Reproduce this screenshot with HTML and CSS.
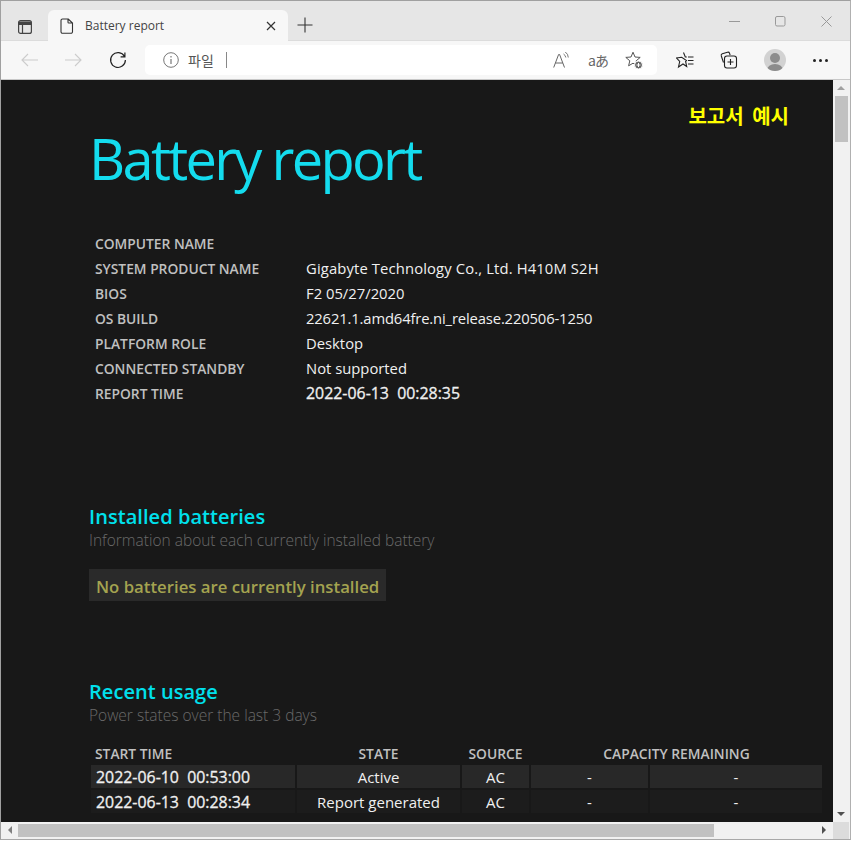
FILE: index.html
```html
<!DOCTYPE html>
<html lang="ko">
<head>
<meta charset="utf-8">
<title>Battery report</title>
<link rel="stylesheet" href="styles.css">
</head>
<body>
<div class="window">
  <div class="tabstrip">
    <div class="tabs-btn">
      <svg width="16" height="16" viewBox="0 0 16 16" fill="none" stroke="#444" stroke-width="1.200"><path d="M2 2.500h12v3H2z" fill="#444" stroke="none"/><rect x="1.600" y="1.600" width="12.800" height="12.800" rx="2"/><path d="M1.600 5.500h12.800M5.500 5.500v8.900"/></svg>
    </div>
    <div class="tab">
      <svg class="tab-doc" width="14" height="16" viewBox="0 0 14 16" fill="none" stroke="#333" stroke-width="1.100"><path d="M2.500 1h5.800L12.500 5v8.800a1.500 1.500 0 0 1-1.500 1.500H2.500A1.500 1.500 0 0 1 1 13.800V2.500A1.500 1.500 0 0 1 2.500 1zM8 1v3.200A.8.8 0 0 0 8.800 5h3.700"/></svg>
      <span class="tab-title">Battery report</span>
      <svg class="tab-close" width="10" height="10" viewBox="0 0 10 10" stroke="#333" stroke-width="1.200"><path d="M1 1l8 8M9 1l-8 8"/></svg>
    </div>
    <svg class="new-tab" width="16" height="16" viewBox="0 0 16 16" stroke="#333" stroke-width="1.100"><path d="M8 .5v15M.5 8h15"/></svg>
    <div class="caption">
      <svg width="11" height="11" viewBox="0 0 11 11" stroke="#999"><path d="M0 5.500h11"/></svg>
      <svg width="11" height="11" viewBox="0 0 11 11" fill="none" stroke="#999"><rect x=".5" y=".5" width="9.500" height="9.500" rx="1.500"/></svg>
      <svg width="11" height="11" viewBox="0 0 11 11" stroke="#999"><path d="M.5.500l10 10M10.500.500l-10 10"/></svg>
    </div>
  </div>
  <div class="toolbar">
    <div class="nav">
      <svg width="17" height="14" viewBox="0 0 17 14" fill="none" stroke="#ccc" stroke-width="1.100"><path d="M17 7H1M7 1L1 7l6 6"/></svg>
      <svg width="17" height="14" viewBox="0 0 17 14" fill="none" stroke="#ccc" stroke-width="1.100"><path d="M0 7h16M10 1l6 6-6 6"/></svg>
      <svg class="reload" width="18" height="18" viewBox="0 0 18 18" fill="none" stroke="#222" stroke-width="1.200"><path d="M15.500 5.500A7.400 7.400 0 1 0 16.400 9M15.900 1.500v4.300h-4.300"/></svg>
    </div>
    <div class="address">
      <svg class="info" width="16" height="16" viewBox="0 0 16 16" fill="none" stroke="#777"><circle cx="8" cy="8" r="7.300"/><path d="M8 7v5M8 4v1.500" stroke-width="1.200"/></svg>
      <span class="proto">파일</span>
      <span class="sep"></span>
      <div class="addr-icons">
        <svg class="read-aloud" width="18" height="18" viewBox="0 0 18 18" fill="none" stroke="#666"><path d="M.7 16.500L5.600 3.500h1l4.900 13M2.400 12h7.400"/><path d="M10.500 3a5 5 0 0 1 2.300 3.500M12.300 1a7 7 0 0 1 3 5.500" stroke-width=".9"/></svg>
        <span class="translate">aあ</span>
        <svg width="18" height="18" viewBox="0 0 18 18" fill="none" stroke="#555"><path d="M8 1.200L10 6l5.200.4-4 3.400 1.200 5L8 12.200l-4.400 2.600 1.200-5-4-3.400L6 6z"/><circle cx="13.500" cy="14" r="4" fill="#666" stroke="#fff"/><path d="M13.500 12v4M11.500 14h4" stroke="#fff"/></svg>
      </div>
    </div>
    <div class="tools">
      <svg width="18" height="18" viewBox="0 0 18 18" fill="none" stroke="#222" stroke-width="1.100"><path d="M7.500 1.500l1.800 4.500h1.500M10.500 9.500l-.9.9 1.100 5.100L7 13l-4.500 3 1.200-5.500L.5 7l5.200-.7zM12 6h5.500M12 9.500h5.500M12 13h5.500"/></svg>
      <svg width="18" height="18" viewBox="0 0 18 18" fill="none" stroke="#222" stroke-width="1.100"><path d="M3.500 11.500L1.300 5c-.3-1 0-1.800 1-2.200L7.500 1.200c1-.3 1.700.1 2 1l.6 2"/><rect x="4.500" y="5" width="12" height="12" rx="2.500"/><path d="M10.500 8v6M7.500 11h6"/></svg>
      <div class="avatar"><span class="avatar-head"></span><span class="avatar-body"></span></div>
      <span class="dots"><i></i><i></i><i></i></span>
    </div>
  </div>
  <div class="viewport">
    <main class="page">
      <p class="sample">보고서 예시</p>
      <h1>Battery report</h1>
      <table class="info-table">
        <tr><th>COMPUTER NAME</th><td></td></tr>
        <tr><th>SYSTEM PRODUCT NAME</th><td class="wide">Gigabyte Technology Co., Ltd. H410M S2H</td></tr>
        <tr><th>BIOS</th><td>F2 05/27/2020</td></tr>
        <tr><th>OS BUILD</th><td class="tight">22621.1.amd64fre.ni_release.220506-1250</td></tr>
        <tr><th>PLATFORM ROLE</th><td>Desktop</td></tr>
        <tr><th>CONNECTED STANDBY</th><td>Not supported</td></tr>
        <tr><th>REPORT TIME</th><td class="time">2022-06-13&nbsp; 00:28:35</td></tr>
      </table>
      <h2 class="first">Installed batteries</h2>
      <p class="desc">Information about each currently installed battery</p>
      <div class="notice">No batteries are currently installed</div>
      <h2 class="second">Recent usage</h2>
      <p class="desc">Power states over the last 3 days</p>
      <table class="usage">
        <colgroup><col class="c1"><col class="c2"><col class="c3"><col class="c4"><col class="c5"></colgroup>
        <tr class="head"><th class="left">START TIME</th><th>STATE</th><th>SOURCE</th><th colspan="2">CAPACITY REMAINING</th></tr>
        <tr class="odd"><td class="stamp">2022-06-10&nbsp; 00:53:00</td><td>Active</td><td>AC</td><td>-</td><td>-</td></tr>
        <tr class="even"><td class="stamp">2022-06-13&nbsp; 00:28:34</td><td>Report generated</td><td>AC</td><td>-</td><td>-</td></tr>
      </table>
    </main>
    <div class="vscroll">
      <span class="arrow up"></span>
      <span class="vthumb"></span>
      <span class="arrow down"></span>
    </div>
  </div>
  <div class="hscroll">
    <span class="arrow left-a"></span>
    <span class="hthumb"></span>
    <span class="arrow right-a"></span>
    <span class="corner"></span>
  </div>
</div>
</body>
</html>
```
FILE: styles.css
```css
* { box-sizing: border-box; }
html, body { margin: 0; height: 100%; overflow: hidden; background: #fff; }
body { font-family: "Open Sans", "Noto Sans CJK KR", sans-serif; }

.window { width: 851px; height: 840px; display: flex; flex-direction: column; border: 1px solid #a0a0a0; border-right-color: #b0b0b0; border-bottom-color: #a8a8a8; }

.tabstrip { height: 40px; flex: none; background: #e6e6e6; display: flex; align-items: flex-end; border-bottom: 1px solid #dcdcdc; position: relative; }
.tabs-btn { width: 47px; height: 31px; padding: 9px 0 0 16px; flex: none; }
.tab { width: 240px; height: 31px; background: #f7f7f7; border-radius: 6px 6px 0 0; display: flex; align-items: center; padding: 0 12px 0 12px; flex: none; margin-bottom: -1px; }
.tab-doc { flex: none; }
.tab-title { font-size: 12px; color: #444; margin-left: 11px; flex: 1; }
.new-tab { margin: 0 0 7px 9px; flex: none; }
.caption { margin-left: auto; height: 100%; display: flex; gap: 35px; align-items: flex-start; padding: 15px 18px 0 0; }

.toolbar { height: 39px; flex: none; background: #f7f7f7; border-bottom: 1px solid #c8c8c8; display: flex; align-items: flex-start; }
.nav { width: 144px; display: flex; gap: 27px; padding: 0 0 0 20px; flex: none; align-items: center; height: 30px; margin-top: 4px; }
.address { width: 512px; height: 30px; margin-top: 4px; background: #fff; border-radius: 5px; display: flex; align-items: center; padding: 0 14px 0 18px; flex: none; }
.proto { font-size: 14px; color: #555; margin-left: 9px; }
.sep { width: 1px; height: 16px; background: #888; margin-left: 12px; }
.addr-icons { margin-left: auto; display: flex; align-items: center; gap: 19px; }
.read-aloud { margin-right: -2px; }
.translate { font-size: 14px; color: #666; width: 18px; letter-spacing: -1px; white-space: nowrap; font-family: "Noto Sans CJK JP", sans-serif; line-height: 18px; }
.tools { display: flex; align-items: center; height: 30px; margin-top: 4px; padding-left: 19px; gap: 26px; }
.avatar { width: 22px; height: 22px; border-radius: 50%; background: #d2d2d2; position: relative; overflow: hidden; margin-right: 1px; }
.avatar-head { position: absolute; left: 6px; top: 4px; width: 10px; height: 10px; border-radius: 50%; background: #8c8c8c; }
.avatar-body { position: absolute; left: 3px; top: 15px; width: 16px; height: 12px; border-radius: 50%; background: #8c8c8c; }
.dots { display: flex; gap: 3px; }
.dots i { width: 3px; height: 3px; border-radius: 50%; background: #222; }

.viewport { flex: 1; min-height: 0; display: flex; overflow: hidden; }
.page { flex: 1; min-width: 0; background: #181818; color: #f0f0f0; padding: 0 0 0 88px; position: relative; overflow: hidden; }
.sample { position: absolute; right: 44px; top: 23px; margin: 0; color: #ffff00; font-weight: 700; font-size: 20px; line-height: 26px; word-spacing: 3px; font-family: "Noto Sans CJK KR", sans-serif; }
h1 { font-weight: 400; font-size: 56px; line-height: 76px; color: #14dcee; margin: 40px 0 0; letter-spacing: -2.700px; }
.info-table { border-collapse: collapse; margin: 35px 0 0 0; font-size: 14.800px; }
.info-table th { text-align: left; color: #c0c0c0; font-weight: 600; font-size: 13.800px; width: 217px; padding: 0 0 0 6px; height: 25px; }
.info-table td { padding: 0 0 1px; height: 25px; color: #f0f0f0; }
.info-table td.wide { letter-spacing: .13px; }
.info-table td.tight { letter-spacing: -.15px; }
.info-table td.time { font-size: 15.900px; -webkit-text-stroke: .3px; }
h2 { font-size: 20px; font-weight: 600; color: #00e0ec; margin: 0; line-height: 27px; letter-spacing: .05px; }
h2.first { margin-top: 97px; }
h2.second { margin-top: 77px; }
.desc { margin: 0; font-size: 15.500px; font-weight: 300; color: #6a6a6a; line-height: 20px; }
.notice { display: inline-block; margin-top: 19px; background: #2a2a2a; color: #a4a350; font-weight: 600; font-size: 16.750px; line-height: 29px; padding: 3px 7px 0; }
.usage { border-collapse: separate; border-spacing: 2px; margin: 15px 0 0 0; table-layout: fixed; width: 735px; font-size: 15px; }
.c1 { width: 204px; } .c2 { width: 163px; } .c3 { width: 67px; } .c4 { width: 117px; } .c5 { width: 172px; }
.usage th { color: #c0c0c0; font-size: 13.800px; font-weight: 600; height: 21px; padding: 2px 0 0; text-align: center; line-height: 18px; }
.usage th.left { text-align: left; padding-left: 4px; }
.usage td { height: 23px; padding: 0; text-align: center; color: #f0f0f0; }
.usage td.stamp { text-align: left; padding-left: 5px; font-size: 15.900px; -webkit-text-stroke: .3px; }
.odd td { background: #282828; }
.even td { background: #1c1c1c; }

.vscroll { width: 17px; flex: none; background: #f1f1f1; display: flex; flex-direction: column; align-items: center; position: relative; padding-right: 1px; }
.vthumb { width: 13px; height: 46px; background: #c1c1c1; margin-top: 1px; }
.hscroll { height: 17px; flex: none; background: #f1f1f1; display: flex; align-items: center; padding-left: 17px; position: relative; }
.hthumb { width: 696px; height: 13px; background: #c1c1c1; }
.corner { position: absolute; right: 1px; top: 0; width: 16px; height: 17px; background: #dcdcdc; }
.arrow { width: 0; height: 0; border: 4px solid transparent; flex: none; }
.up { border-bottom-color: #a0a0a0; border-top-width: 0; margin-top: 6px; margin-bottom: 5px; }
.down { border-top-color: #505050; border-bottom-width: 0; margin-top: auto; margin-bottom: 6px; }
.left-a { border-right-color: #808080; border-left-width: 0; position: absolute; left: 7px; top: 4px; }
.right-a { border-left-color: #505050; border-right-width: 0; position: absolute; right: 24px; top: 4px; }
```
